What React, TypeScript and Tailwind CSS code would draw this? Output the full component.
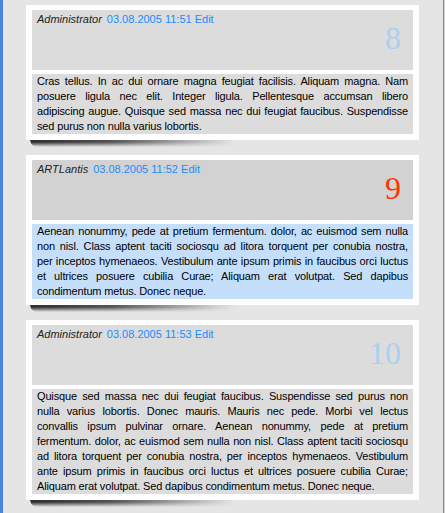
import React from "react";

type Post = {
  author: string;
  date: string;
  num: string;
  numColor: string;
  headBg: string;
  bodyBg: string;
  lines: string[];
};

const posts: Post[] = [
  {
    author: "Administrator",
    date: "03.08.2005 11:51",
    num: "8",
    numColor: "text-[#a9d0f0]",
    headBg: "bg-[#dcdcdc]",
    bodyBg: "bg-[#dcdcdc]",
    lines: [
      "Cras tellus. In ac dui ornare magna feugiat facilisis. Aliquam magna. Nam",
      "posuere ligula nec elit. Integer ligula. Pellentesque accumsan libero",
      "adipiscing augue. Quisque sed massa nec dui feugiat faucibus. Suspendisse",
      "sed purus non nulla varius lobortis.",
    ],
  },
  {
    author: "ARTLantis",
    date: "03.08.2005 11:52",
    num: "9",
    numColor: "text-[#ff3300]",
    headBg: "bg-[#d2d2d2]",
    bodyBg: "bg-[#c5dffb]",
    lines: [
      "Aenean nonummy, pede at pretium fermentum. dolor, ac euismod sem nulla",
      "non nisl. Class aptent taciti sociosqu ad litora torquent per conubia nostra,",
      "per inceptos hymenaeos. Vestibulum ante ipsum primis in faucibus orci luctus",
      "et ultrices posuere cubilia Curae; Aliquam erat volutpat. Sed dapibus",
      "condimentum metus. Donec neque.",
    ],
  },
  {
    author: "Administrator",
    date: "03.08.2005 11:53",
    num: "10",
    numColor: "text-[#a9d0f0]",
    headBg: "bg-[#dcdcdc]",
    bodyBg: "bg-[#dcdcdc]",
    lines: [
      "Quisque sed massa nec dui feugiat faucibus. Suspendisse sed purus non",
      "nulla varius lobortis. Donec mauris. Mauris nec pede. Morbi vel lectus",
      "convallis ipsum pulvinar ornare. Aenean nonummy, pede at pretium",
      "fermentum. dolor, ac euismod sem nulla non nisl. Class aptent taciti sociosqu",
      "ad litora torquent per conubia nostra, per inceptos hymenaeos. Vestibulum",
      "ante ipsum primis in faucibus orci luctus et ultrices posuere cubilia Curae;",
      "Aliquam erat volutpat. Sed dapibus condimentum metus. Donec neque.",
    ],
  },
];

function Card({ p }: { p: Post }) {
  return (
    <div>
      <div className="bg-white pt-[5px] px-[6px] pb-[6px]">
        <div className={`${p.headBg} h-[60px] pl-[5px] pr-[12px] pt-[2px]`}>
          <div className="text-[11px] leading-[14px] whitespace-nowrap">
            <span className="italic text-[#222]">{p.author}</span>
            <span className="ml-[5px] text-[#1a8cff]">{p.date} Edit</span>
          </div>
          <div
            className={`text-right text-[32px] leading-[24px] ${p.numColor} [font-family:'Liberation_Serif',serif]`}
          >
            {p.num}
          </div>
        </div>
        <div className={`${p.bodyBg} mt-[4px] px-[5px] text-[11px] leading-[15px] text-black tracking-[-0.15px]`}>
          {p.lines.map((l, i) => (
            <div
              key={i}
              className={
                i === p.lines.length - 1
                  ? "whitespace-nowrap text-left"
                  : "whitespace-nowrap text-justify [text-align-last:justify]"
              }
            >
              {l}
            </div>
          ))}
        </div>
      </div>
      <div className="ml-[4px] w-[205px] h-[7px] rounded-bl-[8px] bg-[linear-gradient(to_right,#2e2e2e_0%,#555_40%,#e5e5e5_100%)] [mask-image:linear-gradient(to_bottom,#000_30%,transparent_100%)]" />
    </div>
  );
}

export default function App() {
  return (
    <div className="flex w-[445px] h-[513px] overflow-hidden [font-family:'Liberation_Sans',Arial,sans-serif]">
      <div className="w-[3px] bg-[#4a84dc]" />
      <div className="flex-1 bg-[#e5e5e5] pl-[23px] pr-[24px] pt-[5px] flex flex-col gap-[8px]">
        {posts.map((p, i) => (
          <Card key={i} p={p} />
        ))}
      </div>
      <div className="w-[1px] bg-[#8a8a8a]" />
      <div className="w-[1px] bg-[#cfcfcf]" />
    </div>
  );
}
